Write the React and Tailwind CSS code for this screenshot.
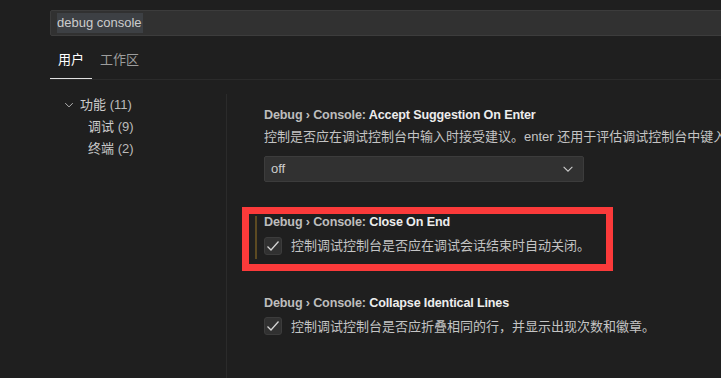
const FONT = { fontFamily: "'Liberation Sans', 'Noto Sans CJK SC', sans-serif" }

function Chevron({ className }) {
  return (
    <svg className={className} viewBox="0 0 16 16" fill="none" stroke="currentColor" strokeWidth="1.2">
      <path d="M3 5.5l5 5 5-5" />
    </svg>
  )
}

function CheckBox() {
  return (
    <div className="w-[18px] h-[18px] shrink-0 rounded-[3px] border border-[#3c3c3c] bg-[#313131] flex items-center justify-center">
      <svg className="w-[16px] h-[16px] text-[#d4d4d4]" viewBox="0 0 16 16" fill="none" stroke="currentColor" strokeWidth="1.3">
        <path d="M2.5 8.5l3.5 3.5 7.5-8.5" />
      </svg>
    </div>
  )
}

function Title({ name }) {
  return (
    <div className="font-bold text-[12.6px] tracking-[-0.15px] whitespace-nowrap">
      <span className="text-[#bdbdbd]">Debug › Console: </span>
      <span className="text-[#ededed]">{name}</span>
    </div>
  )
}

export default function App() {
  return (
    <div className="w-[721px] h-[378px] bg-[#1f1f1f] overflow-hidden relative" style={FONT}>
      <div className="pl-[50px] pt-[10px]">
        <div className="w-[690px] h-[26px] bg-[#313131] border border-[#3c3c3c] rounded-[2px] flex items-center pl-[6px]">
          <span className="bg-[#3d4044] text-[#cccccc] text-[13px] leading-[20px] pr-[1px]">debug console</span>
        </div>
      </div>

      <div className="ml-[50px] h-[44px] flex items-end border-b border-[#2b2b2b]">
        <div className="w-[42px] h-full flex flex-col items-center justify-end">
          <span className="text-[13px] text-[#ffffff] mb-[9px]">用户</span>
          <div className="w-full h-[1px] bg-[#e0e0e0]" />
        </div>
        <div className="h-full flex items-end pl-[8px]">
          <span className="text-[13px] text-[#9d9d9d] mb-[10px]">工作区</span>
        </div>
      </div>

      <div className="flex mt-[14px] h-[284px]">
        <div className="w-[227px] shrink-0 border-r border-[#2b2b2b] text-[13px] text-[#cccccc]">
          <div className="h-[22px] flex items-center pl-[63px]">
            <Chevron className="w-[12px] h-[12px] text-[#c5c5c5] mr-[5px]" />
            <span>功能 <span className="text-[#bbbbbb]">(11)</span></span>
          </div>
          <div className="h-[22px] flex items-center pl-[88px]">
            <span>调试 <span className="text-[#bbbbbb]">(9)</span></span>
          </div>
          <div className="h-[22px] flex items-center pl-[88px]">
            <span>终端 <span className="text-[#bbbbbb]">(2)</span></span>
          </div>
        </div>

        <div className="flex-1 overflow-hidden pl-[28px]">
          <div className="border-l-2 border-transparent pl-[7px] pt-[12px]">
            <div className="leading-[18px]"><Title name="Accept Suggestion On Enter" /></div>
            <div className="mt-[4px] leading-[18px] text-[13px] text-[#c4c4c4] whitespace-nowrap">
              控制是否应在调试控制台中输入时接受建议。enter 还用于评估调试控制台中键入的任何内容。
            </div>
            <div className="mt-[10px] w-[320px] h-[26px] bg-[#313131] border border-[#3c3c3c] rounded-[2px] flex items-center justify-between pl-[6px] pr-[8px]">
              <span className="text-[13px] text-[#cccccc]">off</span>
              <Chevron className="w-[14px] h-[14px] text-[#cccccc]" />
            </div>
          </div>

          <div className="mt-[34px] border-l-2 border-[#5c4a22] pl-[7px] pb-[3px]">
            <div className="leading-[12px]"><Title name="Close On End" /></div>
            <div className="mt-[8px] flex items-center gap-[9px]">
              <CheckBox />
              <span className="text-[13px] text-[#c4c4c4] whitespace-nowrap">控制调试控制台是否应在调试会话结束时自动关闭。</span>
            </div>
          </div>

          <div className="mt-[35px] border-l-2 border-transparent pl-[7px]">
            <div className="leading-[18px]"><Title name="Collapse Identical Lines" /></div>
            <div className="mt-[5px] flex items-center gap-[9px]">
              <CheckBox />
              <span className="text-[13px] text-[#c4c4c4] whitespace-nowrap">控制调试控制台是否应折叠相同的行，并显示出现次数和徽章。</span>
            </div>
          </div>

          <div className="mt-[39px] border-l-2 border-transparent pl-[7px]">
            <div className="leading-[18px]"><Title name="Font Family" /></div>
          </div>
        </div>
      </div>

      <div className="absolute left-[242px] top-[207px] w-[371px] h-[64px] border-[7px] border-[#fb3a3a]" />
    </div>
  )
}
